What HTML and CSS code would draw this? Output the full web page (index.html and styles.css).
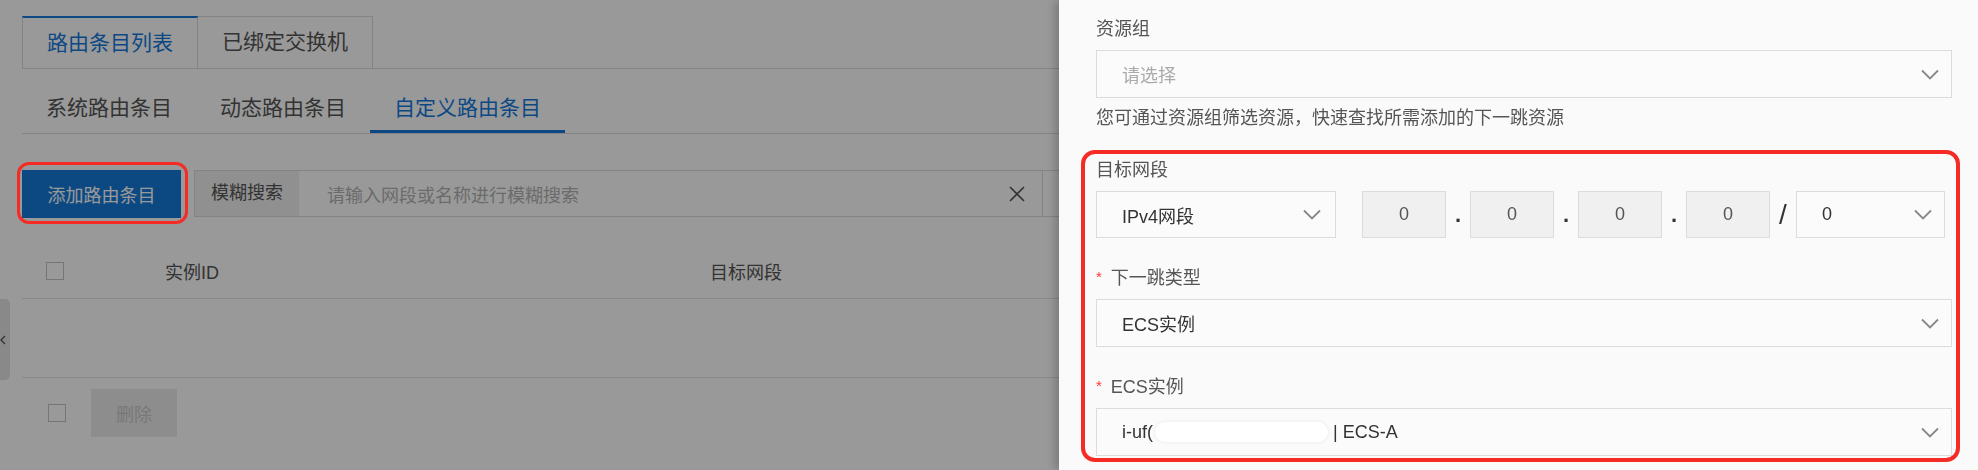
FILE: index.html
```html
<!DOCTYPE html>
<html lang="zh-CN">
<head>
    <meta charset="UTF-8">
    <meta name="viewport" content="width=device-width, initial-scale=1.0">
    <title>路由条目</title>
    <link rel="stylesheet" href="styles.css">
</head>
<body>
    <div class="page">
        <div class="tabs">
            <div class="tab active">路由条目列表</div>
            <div class="tab">已绑定交换机</div>
        </div>

        <div class="subtabs">
            <div class="subtab">系统路由条目</div>
            <div class="subtab">动态路由条目</div>
            <div class="subtab active">自定义路由条目</div>
        </div>

        <div class="toolbar">
            <div class="mark mark-btn">
                <button type="button" class="btn-primary">添加路由条目</button>
            </div>
            <div class="search">
                <span class="search-type">模糊搜索</span>
                <span class="search-input">请输入网段或名称进行模糊搜索</span>
                <svg class="clear" width="16" height="16" viewBox="0 0 16 16">
                    <path d="M1 1l14 14M15 1L1 15" stroke="#555" stroke-width="1.6" fill="none"/>
                </svg>
                <span class="search-btn"></span>
            </div>
        </div>

        <div class="table">
            <div class="row head">
                <div class="cell check"><span class="checkbox"></span></div>
                <div class="cell">实例ID</div>
                <div class="cell">目标网段</div>
            </div>
            <div class="row empty"></div>
        </div>

        <div class="footer">
            <span class="checkbox"></span>
            <button type="button" class="btn-disabled">删除</button>
        </div>
    </div>

    <!-- collapsed side menu toggle -->
    <div class="side-handle">
        <svg width="6" height="10" viewBox="0 0 6 10"><path d="M5 1L1 5l4 4" stroke="#555" stroke-width="1.3" fill="none"/></svg>
    </div>

    <div class="mask"></div>

    <div class="drawer">
        <div class="form-item first">
            <div class="form-label">资源组</div>
            <div class="select">
                <span class="placeholder">请选择</span>
                <svg class="arrow" width="18" height="11" viewBox="0 0 18 11"><path d="M1 1.5l8 8 8-8" fill="none" stroke="#888" stroke-width="1.8"/></svg>
            </div>
            <div class="help">您可通过资源组筛选资源，快速查找所需添加的下一跳资源</div>
        </div>

        <div class="mark mark-form">
            <div class="form-item">
                <div class="form-label">目标网段</div>
                <div class="ip-row">
                    <div class="select ip-type">
                        <span>IPv4网段</span>
                        <svg class="arrow" width="18" height="11" viewBox="0 0 18 11"><path d="M1 1.5l8 8 8-8" fill="none" stroke="#888" stroke-width="1.8"/></svg>
                    </div>
                    <span class="ip-field">0</span>
                    <span class="ip-dot">.</span>
                    <span class="ip-field">0</span>
                    <span class="ip-dot">.</span>
                    <span class="ip-field">0</span>
                    <span class="ip-dot">.</span>
                    <span class="ip-field">0</span>
                    <span class="ip-slash">/</span>
                    <div class="select ip-mask">
                        <span>0</span>
                        <svg class="arrow" width="18" height="11" viewBox="0 0 18 11"><path d="M1 1.5l8 8 8-8" fill="none" stroke="#888" stroke-width="1.8"/></svg>
                    </div>
                </div>
            </div>

            <div class="form-item">
                <div class="form-label"><span class="req">*</span>下一跳类型</div>
                <div class="select">
                    <span>ECS实例</span>
                    <svg class="arrow" width="18" height="11" viewBox="0 0 18 11"><path d="M1 1.5l8 8 8-8" fill="none" stroke="#888" stroke-width="1.8"/></svg>
                </div>
            </div>

            <div class="form-item last">
                <div class="form-label"><span class="req">*</span>ECS实例</div>
                <div class="select">
                    <span>i-uf(<span class="redact"></span> | ECS-A</span>
                    <svg class="arrow" width="18" height="11" viewBox="0 0 18 11"><path d="M1 1.5l8 8 8-8" fill="none" stroke="#888" stroke-width="1.8"/></svg>
                </div>
            </div>
        </div>
    </div>
</body>
</html>
```

FILE: styles.css
```css
body {
    margin: 0;
    font-family: "Liberation Sans", "Noto Sans CJK SC", sans-serif;
    background: #fff;
    color: #555;
    overflow: hidden;
}

.page {
    width: 1078px;
    padding: 16px 0 0 22px;
}

/* top tabs */
.tabs {
    display: flex;
    border-bottom: 1px solid #ddd;
}
.tab {
    height: 51px;
    line-height: 50px;
    padding: 0 24px;
    font-size: 21px;
    color: #555;
    border: 1px solid #ddd;
    border-bottom: 0;
    background: #fff;
}
.tab + .tab {
    border-left: 0;
}
.tab.active {
    color: #1479dc;
    border-top: 2px solid #1479dc;
    line-height: 49px;
    margin-bottom: -1px;
    height: 52px;
    box-sizing: border-box;
}

.subtabs {
    display: flex;
    margin-top: 16px;
    border-bottom: 1px solid #ddd;
}
.subtab {
    height: 48px;
    line-height: 46px;
    padding: 0 24px;
    font-size: 21px;
    color: #555;
    box-sizing: border-box;
}
.subtab.active {
    color: #1479dc;
    border-bottom: 3px solid #1479dc;
    margin-bottom: -1px;
}

/* toolbar */
.toolbar {
    display: flex;
    margin-top: 36px;
    height: 48px;
}
.btn-primary {
    width: 159px;
    height: 48px;
    border: none;
    background: #147ad9;
    color: #fff;
    font-family: inherit;
    font-size: 18px;
    padding: 0;
}
.search {
    flex: 1;
    margin-left: 13px;
    height: 47px;
    border: 1px solid #dcdcdc;
    box-sizing: border-box;
    display: flex;
    align-items: center;
    font-size: 18px;
}
.search-type {
    width: 104px;
    height: 100%;
    line-height: 45px;
    text-align: center;
    background: #f0f0f0;
    color: #555;
}
.search-input {
    flex: 1;
    padding-left: 28px;
    color: #b3b3b3;
}
.clear {
    margin-right: 17px;
}
.search-btn {
    width: 56px;
    height: 100%;
    border-left: 1px solid #dcdcdc;
}

/* table */
.table {
    margin-top: 25px;
}
.row {
    display: grid;
    grid-template-columns: 118px 545px 1fr;
    border-bottom: 1px solid #e3e3e3;
}
.row.head {
    height: 55px;
    align-items: center;
    font-size: 18px;
    color: #555;
}
.row.empty {
    height: 78px;
}
.cell {
    padding-left: 25px;
}
.cell.check {
    padding-left: 24px;
    display: flex;
}
.checkbox {
    display: inline-block;
    width: 16px;
    height: 16px;
    border: 1px solid #c4c4c4;
    background: #fff;
}

.footer {
    display: flex;
    align-items: center;
    margin-top: 11px;
    padding-left: 26px;
}
.btn-disabled {
    margin-left: 25px;
    width: 86px;
    height: 48px;
    border: none;
    background: #ececec;
    color: #c8c8c8;
    font-family: inherit;
    font-size: 18px;
}

.side-handle {
    position: absolute;
    left: 0;
    top: 299px;
    width: 10px;
    height: 81px;
    background: #e4e4e4;
    border-radius: 0 5px 5px 0;
    display: flex;
    align-items: center;
}

.mask {
    position: fixed;
    top: 0;
    left: 0;
    right: 0;
    bottom: 0;
    background: rgba(0, 0, 0, 0.4);
    z-index: 10;
}

/* red annotation rings */
.mark {
    position: relative;
}
.mark::after {
    content: "";
    position: absolute;
    border: 4px solid #f42c25;
    border-radius: 12px;
    pointer-events: none;
    z-index: 30;
}
.mark-btn::after {
    top: -8px;
    left: -5px;
    right: -7px;
    bottom: -6px;
    border-width: 3.5px;
}
.mark-form::after {
    top: -8px;
    left: -15px;
    right: -8px;
    bottom: -6px;
    border-radius: 14px;
}

/* drawer */
.drawer {
    position: fixed;
    top: 0;
    right: 0;
    bottom: 0;
    width: 919px;
    box-sizing: border-box;
    padding: 17px 26px 0 37px;
    background: #fafafa;
    box-shadow: -3px 0 10px rgba(0, 0, 0, 0.25);
    z-index: 20;
    font-size: 18px;
}
.form-item {
    margin-bottom: 27px;
}
.form-item.first {
    margin-bottom: 28px;
}
.form-item.last {
    margin-bottom: 0;
}
.form-label {
    line-height: 24px;
    margin-bottom: 9px;
    color: #555;
}
.req {
    color: #f33;
    font-size: 15px;
    margin-right: 9px;
    vertical-align: 2px;
}
.help {
    margin-top: 8px;
    line-height: 24px;
    color: #555;
}
.select {
    display: flex;
    align-items: center;
    justify-content: space-between;
    height: 48px;
    box-sizing: border-box;
    border: 1px solid #dcdcdc;
    background: #fbfbfb;
    padding: 0 12px 0 25px;
    color: #333;
}
.placeholder {
    color: #aaa;
}
.redact {
    display: inline-block;
    width: 173px;
    height: 20px;
    margin-left: 2px;
    vertical-align: -4px;
    background: #fff;
    border-radius: 10px;
    box-shadow: 0 0 4px rgba(0, 0, 0, 0.08);
}

.ip-row {
    display: flex;
    align-items: center;
    height: 47px;
}
.ip-type {
    width: 240px;
    height: 47px;
    margin-right: 26px;
    padding-right: 14px;
}
.ip-field {
    width: 84px;
    height: 47px;
    line-height: 45px;
    box-sizing: border-box;
    text-align: center;
    background: #eff0ef;
    border: 1px solid #dcdcdc;
    color: #555;
}
.ip-dot {
    width: 24px;
    text-align: center;
    font-size: 22px;
    font-weight: bold;
    color: #333;
}
.ip-slash {
    width: 26px;
    text-align: center;
    font-size: 28px;
    color: #333;
}
.ip-mask {
    width: 149px;
    height: 47px;
}
```
